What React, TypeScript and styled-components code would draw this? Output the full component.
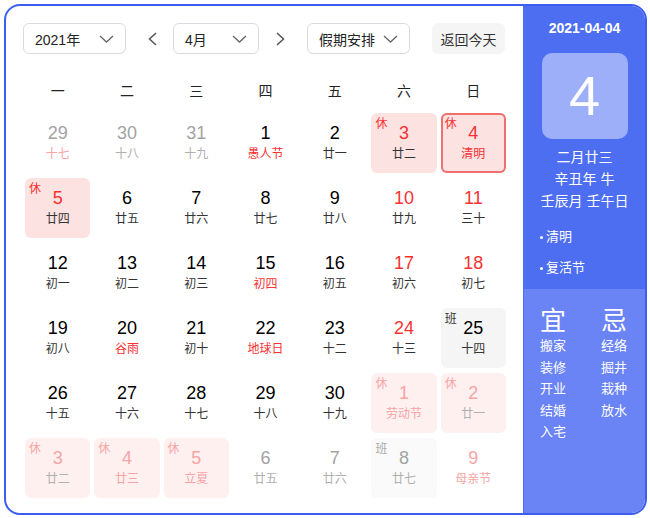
import React from "react";
import styled, { createGlobalStyle } from "styled-components";

type Tone = "normal" | "red" | "gray" | "pink";
type Mark = "none" | "rest" | "work";

interface DayCell {
  day: number;
  lunar: string;
  num: Tone;
  sub: Tone;
  mark: Mark;
  other?: boolean;
  today?: boolean;
}

const toneColor: Record<Tone, string> = {
  normal: "#000",
  red: "#f73131",
  gray: "#a3a3a3",
  pink: "#f7a4a4",
};
const subColor: Record<Tone, string> = {
  normal: "#333",
  red: "#f73131",
  gray: "#b0b0b0",
  pink: "#f7a4a4",
};

//small helper so the month table stays readable
const c = (
  day: number,
  lunar: string,
  num: Tone = "normal",
  sub: Tone = "normal",
  mark: Mark = "none",
  other = false,
  today = false
): DayCell => ({ day, lunar, num, sub, mark, other, today });

const weeks: DayCell[][] = [
  [
    c(29, "十七", "gray", "pink", "none", true),
    c(30, "十八", "gray", "gray", "none", true),
    c(31, "十九", "gray", "gray", "none", true),
    c(1, "愚人节", "normal", "red"),
    c(2, "廿一"),
    c(3, "廿二", "red", "normal", "rest"),
    c(4, "清明", "red", "red", "rest", false, true),
  ],
  [
    c(5, "廿四", "red", "normal", "rest"),
    c(6, "廿五"),
    c(7, "廿六"),
    c(8, "廿七"),
    c(9, "廿八"),
    c(10, "廿九", "red"),
    c(11, "三十", "red"),
  ],
  [
    c(12, "初一"),
    c(13, "初二"),
    c(14, "初三"),
    c(15, "初四", "normal", "red"),
    c(16, "初五"),
    c(17, "初六", "red"),
    c(18, "初七", "red"),
  ],
  [
    c(19, "初八"),
    c(20, "谷雨", "normal", "red"),
    c(21, "初十"),
    c(22, "地球日", "normal", "red"),
    c(23, "十二"),
    c(24, "十三", "red"),
    c(25, "十四", "normal", "normal", "work"),
  ],
  [
    c(26, "十五"),
    c(27, "十六"),
    c(28, "十七"),
    c(29, "十八"),
    c(30, "十九"),
    c(1, "劳动节", "pink", "pink", "rest", true),
    c(2, "廿一", "pink", "gray", "rest", true),
  ],
  [
    c(3, "廿二", "pink", "gray", "rest", true),
    c(4, "廿三", "pink", "pink", "rest", true),
    c(5, "立夏", "pink", "pink", "rest", true),
    c(6, "廿五", "gray", "gray", "none", true),
    c(7, "廿六", "gray", "gray", "none", true),
    c(8, "廿七", "gray", "gray", "work", true),
    c(9, "母亲节", "pink", "pink", "none", true),
  ],
];

const weekNames = ["一", "二", "三", "四", "五", "六", "日"];
const goodThings = ["搬家", "装修", "开业", "结婚", "入宅"];
const badThings = ["经络", "掘井", "栽种", "放水"];

const Chevron = () => (
  <svg width="15" height="8" viewBox="0 0 15 8">
    <polyline points="1,1 7.5,7 14,1" fill="none" stroke="#666" strokeWidth="1.3" />
  </svg>
);

const Arrow: React.FC<{ dir: "left" | "right" }> = ({ dir }) => (
  <svg width="9" height="14" viewBox="0 0 9 14">
    <polyline
      points={dir === "left" ? "8,1 1.5,7 8,13" : "1,1 7.5,7 1,13"}
      fill="none"
      stroke="#555"
      strokeWidth="1.5"
    />
  </svg>
);

const App: React.FC = () => {
  return (
    <>
      <GlobalStyle />
      <Frame>
        <Main>
          <Toolbar>
            <Select $width={103}>
              <span>2021年</span>
              <Chevron />
            </Select>
            <ArrowBtn $side="left">
              <Arrow dir="left" />
            </ArrowBtn>
            <Select $width={86}>
              <span>4月</span>
              <Chevron />
            </Select>
            <ArrowBtn $side="right">
              <Arrow dir="right" />
            </ArrowBtn>
            <Select $width={103}>
              <span>假期安排</span>
              <Chevron />
            </Select>
            <TodayButton>返回今天</TodayButton>
          </Toolbar>
          <WeekHeader>
            {weekNames.map((w) => (
              <span key={w}>{w}</span>
            ))}
          </WeekHeader>
          <DayGrid>
            {weeks.flat().map((d, idx) => (
              <Cell key={idx} $mark={d.mark} $other={!!d.other} $today={!!d.today}>
                {d.mark !== "none" && (
                  <Badge $mark={d.mark} $other={!!d.other}>
                    {d.mark === "rest" ? "休" : "班"}
                  </Badge>
                )}
                <DayNum $tone={d.num}>{d.day}</DayNum>
                <Lunar $tone={d.sub}>{d.lunar}</Lunar>
              </Cell>
            ))}
          </DayGrid>
        </Main>
        <Side>
          <SideTop>
            <DateLine>2021-04-04</DateLine>
            <BigDay>4</BigDay>
            <LunarInfo>
              <div>二月廿三</div>
              <div>辛丑年 牛</div>
              <div>壬辰月 壬午日</div>
            </LunarInfo>
            <Festivals>
              <li>清明</li>
              <li>复活节</li>
            </Festivals>
          </SideTop>
          <SideBottom>
            <AdviceCol>
              <AdviceTitle>宜</AdviceTitle>
              {goodThings.map((t) => (
                <AdviceItem key={t}>{t}</AdviceItem>
              ))}
            </AdviceCol>
            <AdviceCol>
              <AdviceTitle>忌</AdviceTitle>
              {badThings.map((t) => (
                <AdviceItem key={t}>{t}</AdviceItem>
              ))}
            </AdviceCol>
          </SideBottom>
        </Side>
      </Frame>
    </>
  );
};

const GlobalStyle = createGlobalStyle`
  body {
    margin: 0;
    background: #fff;
    font-family: "Liberation Sans", "Noto Sans CJK SC", sans-serif;
  }
`;

const Frame = styled.div`
  display: flex;
  box-sizing: border-box;
  margin: 4px;
  width: 643px;
  height: 511px;
  border: 2px solid #3b5ef0;
  border-radius: 16px;
  overflow: hidden;
  background: #fff;
`;

const Main = styled.div`
  flex: 1;
  padding: 17px 0 0 19px;
`;

const Toolbar = styled.div`
  display: flex;
  align-items: center;
  height: 31px;
  margin-left: -2px;
`;

const Select = styled.div<{ $width: number }>`
  box-sizing: border-box;
  width: ${(p) => p.$width}px;
  height: 31px;
  padding: 0 11px 0 11px;
  display: flex;
  align-items: center;
  justify-content: space-between;
  border: 1px solid #dadae0;
  border-radius: 6px;
  font-size: 14px;
  color: #222;
`;

const ArrowBtn = styled.div<{ $side: "left" | "right" }>`
  box-sizing: border-box;
  width: ${(p) => (p.$side === "left" ? 47 : 48)}px;
  height: 31px;
  display: flex;
  align-items: center;
  justify-content: ${(p) => (p.$side === "left" ? "flex-end" : "flex-start")};
  padding: ${(p) => (p.$side === "left" ? "0 16px 0 0" : "0 0 0 17px")};
`;

const TodayButton = styled.div`
  margin-left: 22px;
  width: 73px;
  height: 31px;
  display: flex;
  align-items: center;
  justify-content: center;
  background: #f5f5f6;
  border-radius: 6px;
  font-size: 14px;
  color: #333;
`;

const WeekHeader = styled.div`
  width: 481px;
  margin-top: 16px;
  height: 40px;
  display: grid;
  grid-template-columns: repeat(7, 1fr);
  column-gap: 4px;
  align-items: center;
  text-align: center;
  font-size: 14px;
  color: #222;
`;

const DayGrid = styled.div`
  width: 481px;
  margin-top: 3px;
  display: grid;
  grid-template-columns: repeat(7, 1fr);
  grid-auto-rows: 60px;
  column-gap: 4px;
  row-gap: 5px;
`;

const cellBg = (mark: Mark, other: boolean) => {
  if (mark === "rest") return other ? "#fff0f0" : "#fde2e2";
  if (mark === "work") return other ? "#fafafa" : "#f5f5f5";
  return "transparent";
};

const Cell = styled.div<{ $mark: Mark; $other: boolean; $today: boolean }>`
  position: relative;
  box-sizing: border-box;
  padding-top: 9px;
  display: flex;
  flex-direction: column;
  align-items: center;
  border-radius: 6px;
  background: ${(p) => cellBg(p.$mark, p.$other)};
  box-shadow: ${(p) => (p.$today ? "inset 0 0 0 2px #ef6f6f" : "none")};
`;

const Badge = styled.span<{ $mark: Mark; $other: boolean }>`
  position: absolute;
  left: 4px;
  top: 4px;
  font-size: 12px;
  line-height: 14px;
  color: ${(p) =>
    p.$mark === "rest"
      ? p.$other
        ? "#f7a4a4"
        : "#f73131"
      : p.$other
      ? "#aaa"
      : "#333"};
`;

const DayNum = styled.div<{ $tone: Tone }>`
  font-size: 18px;
  line-height: 22px;
  color: ${(p) => toneColor[p.$tone]};
`;

const Lunar = styled.div<{ $tone: Tone }>`
  margin-top: 2px;
  font-size: 12px;
  line-height: 16px;
  color: ${(p) => subColor[p.$tone]};
`;

const Side = styled.div`
  width: 121px;
  display: flex;
  flex-direction: column;
  border-left: 1px solid #4e6ef2;
  color: #fff;
`;

const SideTop = styled.div`
  height: 283px;
  box-sizing: border-box;
  padding-top: 12px;
  background: #4e6ef2;
`;

const DateLine = styled.div`
  text-align: center;
  font-size: 14px;
  line-height: 20px;
  font-weight: bold;
`;

const BigDay = styled.div`
  margin: 15px auto 0;
  width: 86px;
  height: 86px;
  border-radius: 10px;
  background: rgba(255, 255, 255, 0.45);
  text-align: center;
  font-size: 56px;
  line-height: 86px;
`;

const LunarInfo = styled.div`
  margin-top: 7px;
  text-align: center;
  font-size: 14px;
  line-height: 22px;
`;

const Festivals = styled.ul`
  list-style: none;
  margin: 15px 0 0;
  padding: 0 0 0 16px;
  font-size: 13px;
  line-height: 20px;

  li {
    display: flex;
    align-items: center;
  }
  li + li {
    margin-top: 11px;
  }
  li::before {
    content: "";
    width: 3px;
    height: 3px;
    border-radius: 50%;
    background: #fff;
    margin-right: 3px;
  }
`;

const SideBottom = styled.div`
  flex: 1;
  display: flex;
  padding: 18px 0 0 16px;
  background: #6a83f5;
`;

const AdviceCol = styled.div`
  flex-shrink: 0;
  width: 61px;
  display: flex;
  flex-direction: column;
`;

const AdviceTitle = styled.div`
  font-size: 26px;
  line-height: 28px;
`;

const AdviceItem = styled.div`
  font-size: 13px;
  line-height: 21.5px;
`;

export default App;
